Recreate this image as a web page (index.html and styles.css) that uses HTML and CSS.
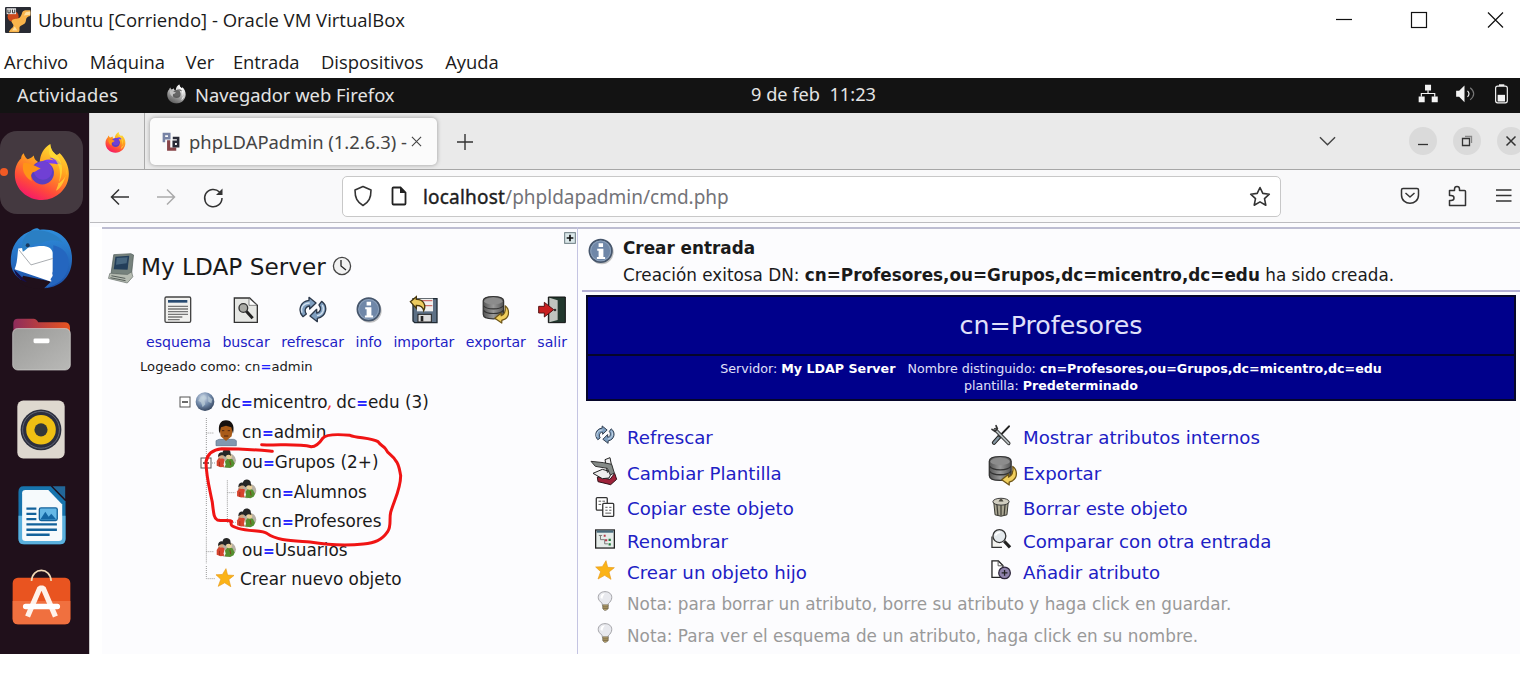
FILE: index.html
```html
<!DOCTYPE html>
<html lang="es">
<head>
<meta charset="utf-8">
<title>Ubuntu [Corriendo] - Oracle VM VirtualBox</title>
<link rel="stylesheet" href="styles.css">
</head>
<body>
<svg class="defs" aria-hidden="true">
  <defs>
    <linearGradient id="gFox" x1="0.8" y1="0" x2="0.3" y2="1"><stop offset="0" stop-color="#ffe83a"/><stop offset=".4" stop-color="#ffa01f"/><stop offset=".75" stop-color="#ff4a3a"/><stop offset="1" stop-color="#f5176c"/></linearGradient>
    <linearGradient id="gBlue" x1="0" y1="0" x2="0" y2="1"><stop offset="0" stop-color="#2f8fdc"/><stop offset="1" stop-color="#1c4fa8"/></linearGradient>
    <linearGradient id="gGray" x1="0" y1="0" x2="1" y2="1"><stop offset="0" stop-color="#9a9a98"/><stop offset="1" stop-color="#b9b9b7"/></linearGradient>
    <linearGradient id="gFold" x1="0" y1="0" x2="1" y2="0"><stop offset="0" stop-color="#8e2c5c"/><stop offset="1" stop-color="#e9541f"/></linearGradient>
    <linearGradient id="gCyl" x1="0" y1="0" x2="1" y2="0"><stop offset="0" stop-color="#555"/><stop offset=".5" stop-color="#999"/><stop offset="1" stop-color="#555"/></linearGradient>
    <radialGradient id="gGlobe" cx=".4" cy=".3" r=".8"><stop offset="0" stop-color="#d5e0ee"/><stop offset=".5" stop-color="#7088a8"/><stop offset="1" stop-color="#26344c"/></radialGradient>
  </defs>
  <symbol id="firefox" viewBox="0 0 168 172">
    <path fill="url(#gFox)" d="M2 92C2 68 12 52 21 44c0-7 3-12 8-16 2 9 6 14 12 18 8-3 13-5 18-11 1 11 8 18 18 22C78 30 90 12 109 0c1 16 8 25 19 33 5-2 7-3 9-6 18 18 28 40 28 63 0 45-37 79-81 79S2 137 2 92z"/>
    <path fill="#7b3ff0" d="M76 60c12-14 31-16 43-10-2-4-7-6-12-8 16-2 30 10 35 20-2-1-8-3-13-1-14-3-39-4-53-1z"/>
    <circle cx="85" cy="87" r="35" fill="#5a3fc0"/><circle cx="87" cy="80" r="28" fill="#7040d4"/>
    <path fill="#ff9417" d="M28 57c17-1 33 9 52 17-10 3-12 10-24 11-7 7-6 18-2 26-16-6-34-30-26-54z"/>
    <path fill="#ffdd36" opacity=".75" d="M109 0c1 16 8 25 19 33 22 22 21 63 4 88 10-8 30-22 28-48-4 35-19 61-34 68 16-35 17-66 0-91C107 37 99 31 109 0z"/>
  </symbol>
  <symbol id="i-info" viewBox="0 0 76 78">
    <circle cx="40" cy="41" r="35" fill="#999" opacity=".6"/><circle cx="37" cy="37" r="33" fill="#6f87a8" stroke="#46566c" stroke-width="5"/><circle cx="37" cy="37" r="29" fill="none" stroke="#8ba0ba" stroke-width="3"/>
    <path fill="#fff" d="M31 15h13v11H31zM27 31h18v24h5v6H26v-6h5V37h-4z"/>
  </symbol>
  <symbol id="i-refresh" viewBox="0 0 84 80">
    <g stroke="#2d3a4c" stroke-width="4" stroke-linejoin="round"><path fill="#7f9fc0" d="M12 60C-4 44 2 14 30 11V2l21 17-19 18v-9C19 29 15 42 22 52z"/><path fill="#7f9fc0" d="M68 14c20 14 15 46-13 51v10L33 58l20-20v11c12-2 15-14 7-24z"/></g>
    <path d="M9 48C4 32 13 20 32 19M70 25c8 14 1 30-16 32" fill="none" stroke="#d2e0ee" stroke-width="4"/>
  </symbol>
  <symbol id="i-export" viewBox="0 0 90 92">
    <path fill="url(#gCyl)" stroke="#333" stroke-width="4" d="M3 16C3 6 19 2 36 2s34 4 34 14v44c0 10-16 15-34 15S3 70 3 60z"/>
    <ellipse cx="36" cy="17" rx="30" ry="11" fill="#8c8c8c"/><path d="M4 32c10 14 55 14 65 0M4 47c10 14 55 14 65 0" fill="none" stroke="#333" stroke-width="4"/>
    <path fill="#f1cf5d" stroke="#6e5517" stroke-width="4" stroke-linejoin="round" d="M75 32c14 10 16 34-1 44l-10 4v9L41 73l21-17v9c12-5 15-18 13-33z"/>
  </symbol>
  <symbol id="i-group" viewBox="0 0 62 62">
    <ellipse cx="33" cy="34" rx="27" ry="22" fill="#b7b0a4"/><path fill="#d6452f" d="M4 50V36l8-10 14 4 2 22-12 2z"/><path fill="#558f2f" d="M28 54V38l8-10 14 3 6 12-3 8-10 5z"/>
    <circle cx="16" cy="22" r="7" fill="#d2a67e"/><circle cx="40" cy="23" r="8" fill="#e8cf9a"/><path fill="#262626" d="M8 24c-1-11 7-15 13-13 1-14 25-13 23 3l2 7c-7-5-13-4-17 3-5-7-13-6-21 0z"/><path d="M24 46l3-12 3 12-3 8z" fill="#f4f4f4"/><path d="M12 38v14M42 35l3 13" stroke="#902214" stroke-width="2"/>
  </symbol>
  <symbol id="i-star" viewBox="0 0 60 60"><path fill="#fbb316" stroke="#e79a19" stroke-width="2" d="M33 2l5 20 20 1-16 13 6 22-19-12-20 11 8-22L2 21l20-1z"/></symbol>
  <symbol id="i-bulb" viewBox="0 0 48 62">
    <path fill="#e8e9ee" stroke="#a0a0a5" stroke-width="3" d="M15 38C7 32 3 26 3 20 3 9 12 2 24 2s21 7 21 18c0 8-5 14-11 20v5H16z"/><path fill="#fff" d="M10 21C10 12 16 7 24 8c-4 4-7 9-8 17z"/><path fill="#b6a06a" stroke="#6b6352" stroke-width="2" d="M17 43h17v12l-7 5h-5l-5-5z"/><path d="M17 49h17M18 54h15" stroke="#62573c" stroke-width="2"/>
  </symbol>
  <symbol id="i-minus" viewBox="0 0 36 36"><rect x="3" y="3" width="30" height="30" fill="#fff" stroke="#555" stroke-width="3"/><path d="M9 18h18" stroke="#222" stroke-width="4"/></symbol>
</svg>

<header class="titlebar">
  <svg class="vb" viewBox="0 0 80 80"><rect width="80" height="80" rx="3" fill="#292b33"/><circle cx="25" cy="29" r="17" fill="#cc4a1c"/><path fill="#f9b44b" d="M78 10H62C50 12 54 24 46 32c-8 6-18 2-24 8-5 6 2 10 4 16 0 8-10 10-14 22h30c6-6 0-14 4-18 8-6 16-6 18-16 2-12 4-14 14-16z"/><path fill="#ffe0a0" d="M78 14l-14 2-6 10 20-2zM22 72l8-12 8 12z"/><rect x="5" y="4" width="29" height="18" fill="#e8e8e8"/><path d="M9 8v10h7V8M23 8v10h7V8" stroke="#333" stroke-width="3" fill="none"/></svg>
  <span class="title">Ubuntu [Corriendo] - Oracle VM VirtualBox</span>
  <svg class="winbtns" viewBox="0 0 164 20"><g fill="none" stroke="#111" stroke-width="1.2"><path d="M0 9.500h16"/><rect x="75.500" y="2.500" width="15" height="15"/><path d="M152 2.500l15 15M167 2.500l-15 15"/></g></svg>
</header>
<nav class="menubar"><span>Archivo</span><span>Máquina</span><span class="ver">Ver</span><span class="ent">Entrada</span><span>Dispositivos</span><span>Ayuda</span></nav>

<main class="desktop">
  <div class="topbar">
    <span class="act">Actividades</span>
    <svg class="foxgray" viewBox="0 0 168 172"><use href="#firefox"/></svg>
    <span class="app">Navegador web Firefox</span>
    <span class="clock">9 de feb&nbsp; 11:23</span>
    <svg class="tray" viewBox="0 0 272 62"><g fill="#f4f4f4"><path d="M21 2h18v17H21zM2 37h18v17H2zM41 37h18v17H41zM114 20h9l16-16v50l-16-16h-9z"/><path d="M238 32h22v20h-22z"/></g><g fill="none" stroke="#f4f4f4" stroke-width="3.500"><path d="M30 18v10M10 38V28h40v10"/><path d="M148 20c6 6 6 12 0 18"/><path d="M156 11c14 12 14 24 0 36" stroke="#777"/><rect x="232" y="6" width="35" height="50" rx="6"/><path d="M242 3h16" stroke-width="5"/></g></svg>
  </div>
  <div class="workspace">
    <aside class="dock">
      <div class="tile active"><i class="dot"></i><svg width="56" height="57"><use href="#firefox"/></svg></div>
      <svg class="bird" viewBox="0 0 192 188">
        <path fill="url(#gBlue)" d="M3 112C-2 57 30 23 63 12 76 0 86 2 91 8c60-6 98 33 98 88 0 47-27 86-85 90l13-13C71 171 63 158 50 166 23 159 5 137 3 112z"/>
        <path fill="#20101b" d="M40 148l92 19-10 10-20 12c-28 0-50-4-72-20z"/><path fill="#16104a" d="M12 128l40 40C30 162 16 148 12 128z"/><path fill="#fff" d="M25 65c16-2 35-3 55-6 30-5 48 3 50 19v90L14 128c8-17 8-37 11-63z"/>
        <path fill="none" stroke="#a8acb0" stroke-width="3" d="M27 69l37 46 68-20"/><path fill="#2a7fc4" d="M62 13C88 3 146 17 160 47c-20-10-44-10-66 3C65 47 58 63 39 75c-8-32 6-50 23-62z"/><path fill="#2466bf" d="M132 55c34 8 50 30 46 62-4 37-29 59-74 69l23-22c-7-4-2-8 6-18-7-2-3-10 3-20-8 0-4-34-4-71z"/><circle cx="54" cy="55" r="6" fill="#17395f"/>
      </svg>
      <svg class="files" viewBox="0 0 178 160"><path fill="url(#gFold)" d="M4 50V15Q5 2 17 2h48q9 0 14 11h80q15 0 16 15v24z"/><rect x="2" y="32" width="174" height="125" rx="15" fill="url(#gGray)" stroke="#d5d4d2" stroke-width="2"/><rect x="65" y="62" width="48" height="14" rx="4" fill="#fff"/></svg>
      <svg class="speaker" viewBox="0 0 146 178"><rect x="1" y="1" width="144" height="176" rx="18" fill="#ded8cf"/><circle cx="73" cy="90" r="62" fill="#2c2f3e"/><circle cx="73" cy="90" r="56" fill="none" stroke="#636776" stroke-width="3"/><circle cx="73" cy="90" r="45" fill="#efbf13"/><circle cx="73" cy="90" r="20" fill="#343838"/></svg>
      <svg class="writer" viewBox="0 0 144 178"><path fill="#1774ad" d="M16 1h82l45 46v112q0 17-17 17H18q-17 0-17-17V18Q1 1 16 1z"/><path fill="#5ab0dd" d="M1 90h142v69q0 17-17 17H18q-17 0-17-17z"/><path fill="#f6fafc" d="M22 12h69l42 44v100q0 10-10 10H22q-10 0-10-10V22q0-10 10-10z"/><path fill="#226799" d="M104 1h38v38z"/><path d="M25 68h30M25 84h30M25 100h30M25 116h92M25 132h92M25 147h70" stroke="#12629b" stroke-width="7"/><rect x="64" y="66" width="54" height="38" rx="5" fill="#65b8e6" stroke="#12629b" stroke-width="4"/><path fill="#1467a4" d="M67 101l15-23 10 15 8-9 15 17z"/></svg>
      <svg class="store" viewBox="0 0 178 166"><rect x="2" y="25" width="174" height="140" rx="16" fill="#e95420"/><path fill="#f0703f" d="M2 95h174v54q0 16-16 16H18q-16 0-16-16z"/><path fill="none" stroke="#f1d9b5" stroke-width="5" d="M59 35C60-8 117-8 118 35"/><path fill="none" stroke="#fff2ea" stroke-width="16" stroke-linejoin="bevel" d="M47 142L84 56h10l37 86"/><rect x="33" y="103" width="112" height="17" rx="8" fill="#fff"/></svg>
    </aside>
    <section class="browser">
      <div class="tabs">
        <div class="pin"><svg width="21" height="21"><use href="#firefox"/></svg></div>
        <div class="tab">
          <svg class="pla" viewBox="0 0 60 60"><path fill="none" stroke="#7783a5" stroke-width="8" d="M6 32V6h17v14H6"/><path fill="none" stroke="#884448" stroke-width="10" d="M21 26v28h24"/><path fill="none" stroke="#292b37" stroke-width="8" d="M34 19h17v26H37V31h14"/></svg>
          <span class="tabtext">phpLDAPadmin (1.2.6.3) -</span>
          <svg class="x" viewBox="0 0 12 12"><path d="M1 1l10 10M11 1L1 11" stroke="#444" stroke-width="1.200"/></svg>
        </div>
        <svg class="plus" viewBox="0 0 16 16"><path d="M8 0v16M0 8h16" stroke="#333" stroke-width="1.400"/></svg>
        <svg class="chev" viewBox="0 0 18 10"><path d="M1 1l8 8 8-8" fill="none" stroke="#444" stroke-width="1.500"/></svg>
        <span class="round"><svg viewBox="0 0 28 28"><path d="M9 17.500h10" stroke="#333" stroke-width="1.300"/></svg></span>
        <span class="round"><svg viewBox="0 0 28 28"><g fill="none" stroke="#333" stroke-width="1.300"><path d="M9.500 11.500h7v7h-7z"/><path d="M12 9.500h6.500V16" stroke="#888"/></g></svg></span>
        <span class="round"><svg viewBox="0 0 28 28"><path d="M9.500 9.500l9 9M18.500 9.500l-9 9" stroke="#333" stroke-width="1.500"/></svg></span>
      </div>
      <div class="navbar">
        <svg class="hist" viewBox="0 0 114 20"><g fill="none" stroke-width="1.500"><path stroke="#333" d="M19 10H1.500M9 2.500L1.500 10l7.500 7.500"/><path stroke="#aaa" d="M47 10h17.500M57 2.500l7.500 7.500-7.500 7.500"/><path stroke="#333" d="M109.500 5a8.700 8.700 0 1 0 2.500 6"/></g><path fill="#333" d="M112.500 1.500v6.500H106z"/></svg>
        <div class="url">
          <svg class="shield" viewBox="0 0 20 22"><path d="M10 1.500L18 5c0 8-2 12-8 15.500C4 17 2 13 2 5z" fill="none" stroke="#333" stroke-width="1.600" stroke-linejoin="round"/></svg>
          <svg class="doc" viewBox="0 0 16 20"><path d="M2.500 1.500h7l5 5v11q0 1-1 1h-11q-1 0-1-1v-15q0-1 1-1z" fill="none" stroke="#222" stroke-width="1.800"/><path d="M9 1l6 6H9z" fill="#222"/></svg>
          <span class="addr"><b>localhost</b>/phpldapadmin/cmd.php</span>
          <svg class="fav" viewBox="0 0 22 22"><path d="M11 1.500l2.800 5.900 6.500.8-4.800 4.400 1.300 6.600-5.800-3.300-5.800 3.300 1.300-6.600L1.700 8.200l6.500-.8z" fill="none" stroke="#333" stroke-width="1.600" stroke-linejoin="round"/></svg>
        </div>
        <svg class="tools" viewBox="0 0 112 22"><g fill="none" stroke="#333" stroke-width="1.500" stroke-linejoin="round"><path d="M3 3.500h14q1.500 0 1.500 1.500v5c0 11-17 11-17 0V5q0-1.500 1.500-1.500z"/><path d="M5.500 8l4.500 4 4.500-4"/><path d="M49.500 5.500h5V4c0-3.500 5-3.500 5 0v1.500h5q1 0 1 1v14H49.500v-5h1.500c4 0 4-5 0-5h-1.500z"/><path d="M96 5h15.500M96 10.500h15.500M96 16h15.500"/></g></svg>
      </div>
      <div class="page">
        <section class="left">
          <svg class="expand" viewBox="0 0 36 36"><rect x="2" y="2" width="32" height="32" fill="#dbe8ea" stroke="#697a80" stroke-width="3"/><path d="M18 8v20M8 18h20" stroke="#111" stroke-width="5"/></svg>
          <div class="server">
            <svg class="pc" viewBox="0 0 84 94"><path fill="#76827d" stroke="#4a5553" stroke-width="2" d="M20 5l52-3 8 4-6 58-17 5-45-8z"/><path fill="#233e5a" d="M25 11l42-3-5 43-42-2z"/><path fill="#46657e" d="M29 15l33-2-3 18-32 5z"/><path fill="#b6bcb2" stroke="#616b66" stroke-width="2" d="M8 62l54 3 12-8 4 15-17 19-57-14z"/><path d="M13 69l42 8M10 75l46 9" stroke="#555d59" stroke-width="3"/></svg>
            <span class="sname">My LDAP Server</span>
            <svg class="clk" viewBox="0 0 20 20"><circle cx="10" cy="10" r="8.600" fill="#f2f2f2" stroke="#444" stroke-width="1.300"/><path d="M9 4v6l5 4" fill="none" stroke="#222" stroke-width="1.300"/></svg>
          </div>
          <div class="actions">
            <a><svg class="ai" viewBox="0 0 84 84"><rect x="3" y="3" width="77" height="76" rx="4" fill="#f1f1ef" stroke="#444" stroke-width="4"/><path d="M12 16h58" stroke="#284b72" stroke-width="8"/><path d="M12 31h60M12 39h60M12 47h60M12 55h60M12 63h43M12 71h35" stroke="#777" stroke-width="4"/></svg>esquema</a>
            <a><svg class="ai" viewBox="0 0 84 84"><path fill="#e6e7e4" stroke="#333" stroke-width="4" d="M7 6h46l23 22v51H7z"/><path fill="#fff" stroke="#555" stroke-width="2" d="M51 7v21h24z"/><circle cx="34" cy="36" r="13" fill="#a9aaa5" stroke="#333" stroke-width="4"/><path d="M43 46l19 21" stroke="#222" stroke-width="9"/></svg>buscar</a>
            <a><svg class="ai"><use href="#i-refresh"/></svg>refrescar</a>
            <a><svg class="ai info"><use href="#i-info"/></svg>info</a>
            <a><svg class="ai" viewBox="0 0 84 84"><path fill="#5d7085" stroke="#202b35" stroke-width="4" d="M9 8h72v72H14l-5-5z"/><rect x="21" y="8" width="48" height="38" fill="#f0f0ef"/><path d="M23 14h44M23 29h44" stroke="#ce706e" stroke-width="4"/><rect x="24" y="55" width="40" height="23" fill="#ddd" stroke="#222" stroke-width="3"/><path d="M36 60v16" stroke="#222" stroke-width="8"/><path fill="#edcb5f" stroke="#48380e" stroke-width="4" d="M1 17L19 2v8c20-1 31 17 22 34-2-12-9-16-22-16v9z"/></svg>importar</a>
            <a><svg class="ai"><use href="#i-export"/></svg>exportar</a>
            <a><svg class="ai" viewBox="0 0 84 84"><path fill="#22382e" stroke="#111" stroke-width="3" d="M31 3h51v77H31z"/><path fill="#c0c4bf" d="M34 5l25 8v59l-25 7z"/><path fill="#c81f20" stroke="#571414" stroke-width="3" d="M2 31h17V19l28 22-28 22V51H2z"/><circle cx="51" cy="42" r="4" fill="#333"/></svg>salir</a>
          </div>
          <div class="logged">Logeado como: cn<b>=</b>admin</div>
          <div class="tree">
            <div class="row r1"><svg width="37" height="22" viewBox="0 0 111 66"><use href="#i-minus" y="15" width="36" height="36"/><circle cx="78" cy="32" r="28" fill="url(#gGlobe)"/><path d="M66 17l9-5 8 9-7 8 3 11-8 9-5-15-8-5zM87 15l13 10-3 12-9-5z" fill="#becfd9" opacity=".7"/></svg><span>dc<b>=</b>micentro<em>,</em> dc<b>=</b>edu (3)</span></div>
            <div class="row r2"><svg width="32" height="30" viewBox="0 0 96 90"><path class="guide" d="M4 3v85M4 48h24"/><path fill="#8298b0" stroke="#5b7088" stroke-width="2" d="M33 71q9-6 18-4h25q14-2 18 4v15H33z"/><path fill="#a95b18" d="M43 31q3-14 20-14t21 14l-4 27-17 14-16-14z"/><path fill="#16110f" d="M43 50c-5-26 3-40 20-40s27 14 21 40l-5-19-16-5-15 5z"/><path d="M51 41h7M68 41h7M57 57h13" stroke="#50270e" stroke-width="3"/></svg><span>cn<b>=</b>admin</span></div>
            <div class="row r3"><svg width="37" height="30" viewBox="0 0 111 90"><path class="guide" d="M19 0v90M36 48h10"/><use href="#i-minus" y="30" width="36" height="36"/><use href="#i-group" x="46" y="5" width="64" height="64"/></svg><span>ou<b>=</b>Grupos (2+)</span></div>
            <div class="row r4"><svg width="52" height="30" viewBox="0 0 156 90"><path class="guide" d="M4 0v90M67 10v80M67 47h25"/><use href="#i-group" x="92" y="6" width="64" height="64"/></svg><span>cn<b>=</b>Alumnos</span></div>
            <div class="row r5"><svg width="52" height="28" viewBox="0 0 156 84"><path class="guide" d="M4 3v80M67 3v43h25"/><use href="#i-group" x="92" y="3" width="64" height="64"/></svg><span>cn<b>=</b>Profesores</span></div>
            <div class="row r6"><svg width="32" height="30" viewBox="0 0 96 90"><path class="guide" d="M4 5v80M4 50h24"/><use href="#i-group" x="31" y="8" width="64" height="64"/></svg><span>ou<b>=</b>Usuarios</span></div>
            <div class="row r7"><svg width="32" height="28" viewBox="0 0 96 84"><path class="guide" d="M4 3v38h26"/><use href="#i-star" x="31" y="9" width="58" height="58"/></svg><span>Crear nuevo objeto</span></div>
            <svg class="scribble" viewBox="0 0 900 660"><path d="M367 217C345 215 290 209 215 209 185 212 172 225 168 248 168 290 180 335 187 370 191 405 192 418 202 423 220 427 240 422 245 427 240 439 244 441 265 448 300 458 340 453 352 464 380 485 430 485 480 489 535 498 595 500 640 495 675 492 695 484 713 458 725 440 717 420 722 400 732 365 752 330 752 290 748 270 747 255 737 245 728 228 713 225 707 210 700 200 692 200 684 188 665 177 620 177 600 169 570 166 530 164 518 178 510 190 500 203 484 203 440 193 385 200 335 197"/></svg>
          </div>
        </section>
        <section class="right">
          <div class="message">
            <svg class="minfo"><use href="#i-info"/></svg>
            <div><h3>Crear entrada</h3><p>Creación exitosa DN: <b>cn=Profesores,ou=Grupos,dc=micentro,dc=edu</b> ha sido creada.</p></div>
          </div>
          <div class="banner">
            <h1>cn=Profesores</h1>
            <div class="sub"><p>Servidor: <b>My LDAP Server</b> &nbsp; Nombre distinguido: <b>cn=Profesores,ou=Grupos,dc=micentro,dc=edu</b></p><p>plantilla: <b>Predeterminado</b></p></div>
          </div>
          <div class="links">
            <a><svg class="s20"><use href="#i-refresh"/></svg>Refrescar</a>
            <a><svg class="s20" viewBox="0 0 60 60"><g fill="none" stroke-linecap="round"><path stroke="#222" stroke-width="13" d="M9 53l18-20"/><path stroke="#8496a1" stroke-width="7" d="M9 53l18-20"/><path stroke="#222" stroke-width="6" d="M25 34L54 4"/><path stroke="#333" stroke-width="11" d="M13 14l40 41"/><path stroke="#b8bfc0" stroke-width="5" d="M13 14l40 41"/><path stroke="#333" stroke-width="5" d="M3 13l9 6 7-8-4-9"/></g></svg>Mostrar atributos internos</a>
            <a><svg class="s30" viewBox="0 0 90 84"><path fill="#9e233a" stroke="#33131b" stroke-width="3" d="M22 60l38 7 14-18 6 18-18 16-38-9z"/><path fill="#eee" stroke="#222" stroke-width="3" d="M45 8l15-6 7 35-15 9zM9 49l28-12 29 8-9 18-20 2z"/><path fill="#858b88" stroke="#333" stroke-width="3" d="M3 13l38 4 24 5 8 26-12 6-9-20-36-6z"/></svg>Cambiar Plantilla</a>
            <a><svg class="exp"><use href="#i-export"/></svg>Exportar</a>
            <a><svg class="s20" viewBox="0 0 60 62"><g fill="#fff" stroke="#333" stroke-width="4"><rect x="3" y="2" width="34" height="39" rx="3"/><rect x="23" y="20" width="34" height="40" rx="3"/></g><path d="M10 13h8M22 13h8M10 23h8M31 32h7M43 32h7M31 41h7M43 41h7M31 50h18" stroke="#555" stroke-width="3"/></svg>Copiar este objeto</a>
            <a><svg class="s20" viewBox="0 0 60 64"><path fill="#aaa693" stroke="#30302a" stroke-width="3" d="M7 18h46l-4 39q-19 9-38 0z"/><path stroke="#403f36" stroke-width="4" d="M17 24l3 34M30 25v34M43 24l-3 34"/><ellipse cx="30" cy="15" rx="26" ry="11" fill="#d1cec0" stroke="#333" stroke-width="3"/><path fill="#4b493f" d="M22 14q8-17 16 0z"/></svg>Borrar este objeto</a>
            <a><svg class="s20" viewBox="0 0 62 60"><rect x="2" y="2" width="58" height="56" fill="#e5ece9" stroke="#222" stroke-width="4"/><path d="M5 7h52" stroke="#486a7c" stroke-width="7"/><path d="M12 19h10M17 19v13h13v13h10" stroke="#777" stroke-width="3" fill="none"/><path d="M27 17h6v6h-6zM31 31h7v6h-7z" fill="#b83b4e"/><path d="M42 29h7v7h-7zM42 43h7v7h-7z" fill="#257b3d"/></svg>Renombrar</a>
            <a><svg class="s20" viewBox="0 0 62 62"><path fill="#f3f3ef" stroke="#333" stroke-width="4" d="M3 23v34h31"/><circle cx="26" cy="22" r="20" fill="#e4e9ec" stroke="#333" stroke-width="4"/><path d="M14 20q4-10 15-10" stroke="#fff" stroke-width="5" fill="none"/><path d="M41 38l18 19" stroke="#222" stroke-width="10"/></svg>Comparar con otra entrada</a>
            <a><svg class="s20"><use href="#i-star"/></svg>Crear un objeto hijo</a>
            <a><svg class="s20" viewBox="0 0 62 62"><path fill="#fff" stroke="#222" stroke-width="4" d="M3 3h20l14 14v37H3z"/><path fill="none" stroke="#555" stroke-width="3" d="M22 3v15h15"/><circle cx="42" cy="40" r="18" fill="#8f83ab" stroke="#30283e" stroke-width="4"/><path d="M42 31v18M33 40h18" stroke="#222" stroke-width="4"/></svg>Añadir atributo</a>
            <p><svg class="bulb"><use href="#i-bulb"/></svg>Nota: para borrar un atributo, borre su atributo y haga click en guardar.</p>
            <p><svg class="bulb"><use href="#i-bulb"/></svg>Nota: Para ver el esquema de un atributo, haga click en su nombre.</p>
          </div>
        </section>
      </div>
    </section>
  </div>
</main>
</body>
</html>
```
FILE: styles.css
```css
* { box-sizing: border-box; }
body { margin: 0; width: 1522px; height: 688px; overflow: hidden; background: #fff; color: #1a1a1a; font-family: "Open Sans", sans-serif; }
h1, h3, p { margin: 0; font-weight: 400; }
svg { flex: none; overflow: visible; }
.defs { position: absolute; width: 0; height: 0; }

.titlebar { display: flex; align-items: center; height: 40px; padding-left: 5px; font-size: 18.5px; }
.vb { width: 26px; height: 26px; margin-top: -1px; }
.title { margin: -2px 0 0 7px; white-space: nowrap; }
.winbtns { width: 164px; height: 20px; margin: 0 22px 0 auto; }
.menubar { display: flex; gap: 21.5px; height: 38px; padding: 3px 0 0 4px; font-size: 18.4px; line-height: 37px; }
.menubar .ver { margin: 0 -3px 0 -1px; }
.menubar .ent { letter-spacing: -.1px; }

.desktop { width: 1520px; height: 576px; overflow: hidden; font-family: "Noto Sans", sans-serif; }
.topbar { display: flex; align-items: center; height: 35px; padding-bottom: 2px; background: #131313; color: #e4e4e4; font-size: 18.35px; white-space: nowrap; }
.act { width: 150px; padding-left: 17px; letter-spacing: .3px; }
.foxgray { width: 19px; height: 20px; margin: -1px 9px 0 17px; filter: grayscale(1) brightness(1.2); }
.app { width: 556px; }
.clock { font-size: 18.2px; margin-top: -1px; }
.tray { width: 91px; height: 21px; margin: 0 11px 0 auto; }

.workspace { display: flex; height: 541px; }
.dock { display: flex; flex-direction: column; width: 89px; background: #20101b; }
.tile { position: relative; display: flex; align-items: center; justify-content: center; width: 83px; height: 83px; margin-top: 18px; border-radius: 17px; background: #443940; }
.dot { position: absolute; left: 0; top: 37px; width: 8px; height: 8px; border-radius: 50%; background: #f15a24; }
.bird { width: 63px; height: 62px; margin: 13px 0 0 10px; }
.files { width: 59px; height: 53px; margin: 29px 0 0 12px; }
.speaker { width: 48px; height: 59px; margin: 29px 0 0 17px; }
.writer { width: 48px; height: 59px; margin: 27px 0 0 18px; }
.store { width: 59px; height: 56px; margin: 24px 0 0 12px; }

.browser { flex: 1; display: flex; flex-direction: column; min-width: 0; border-left: 1px solid #ccc; }
.tabs { display: flex; align-items: center; height: 57px; background: #eaeaea; border-bottom: 1px solid #a7a7a7; }
.pin { display: flex; align-items: center; justify-content: center; width: 55px; height: 56px; padding: 2px 4px 0 0; border-right: 1px solid #aaa; }
.tab { display: flex; align-items: center; width: 287px; height: 47px; margin-left: 5px; padding-left: 12px; border-radius: 5px; background: #fbfbfb; box-shadow: 0 0 4px #999; color: #444; font-size: 18.4px; white-space: nowrap; }
.pla { width: 19px; height: 19px; margin-right: 8px; }
.tabtext { width: 222px; }
.x { width: 11px; height: 11px; }
.plus { width: 16px; height: 16px; margin: 2px 0 0 20px; }
.chev { width: 17px; height: 10px; margin-left: auto; margin-right: 73px; }
.round { flex: none; width: 28px; height: 28px; margin-right: 16px; border-radius: 50%; background: #dadada; }
.round svg { display: block; width: 28px; height: 28px; }
.round:last-child { margin-right: -5px; }
.navbar { display: flex; align-items: center; height: 53px; background: #f9f9fa; border-bottom: 1px solid #bcbcc0; }
.hist { width: 114px; height: 20px; margin: 2px 0 0 20px; }
.url { display: flex; align-items: center; width: 939px; height: 41px; margin: 0 0 0 118px; padding-left: 10px; border: 1px solid #c8c8c8; border-radius: 5px; background: #fff; color: #737378; font-size: 19px; white-space: nowrap; }
.shield { width: 20px; height: 22px; margin-right: 18px; }
.doc { width: 16px; height: 20px; margin-right: 16px; }
.addr { padding-top: 1px; }
.addr b { color: #1d1d1d; font-weight: 400; -webkit-text-stroke: .4px #1d1d1d; letter-spacing: .2px; }
.fav { width: 22px; height: 22px; margin: 1px 9px 0 auto; }
.tools { width: 112px; height: 22px; margin-left: 119px; }

.page { display: flex; height: 431px; padding-top: 4px; background: #fcfcfe; font-family: "DejaVu Sans", sans-serif; color: #1a1a1a; white-space: nowrap; }
.left { position: relative; flex: none; width: 488px; border-left: 12px solid #fff; border-right: 1px solid #c4c4e2; box-shadow: inset 0 2px #bdbdd2; }
.expand { position: absolute; right: 1px; top: 5px; width: 12px; height: 12px; }
.server { display: flex; align-items: center; height: 40px; margin-top: 19px; padding-left: 5px; font-size: 23.2px; }
.pc { width: 28px; height: 31px; margin-top: 4px; }
.sname { margin-left: 6px; }
.clk { width: 20px; height: 20px; margin-left: 6px; }
.actions { display: flex; justify-content: space-between; width: 421px; margin: 10px 0 0 44px; color: #2020c4; font-size: 14.1px; line-height: 20px; }
.actions a { display: flex; flex-direction: column; align-items: center; gap: 8px; }
.ai { width: 28px; height: 28px; }
.ai.info { width: 26px; height: 28px; }
.logged { margin: 6px 0 0 38px; font-size: 13.15px; line-height: 18px; }
.logged b, .tree b { color: #2020ff; }
.tree { position: relative; margin-top: 10px; font-size: 16.85px; }
.tree b { font-size: 14px; }
.row { display: flex; align-items: center; height: 30px; }
.row svg { margin-right: 5px; }
.r1 { height: 31px; padding-left: 77px; }
.r2, .r4, .r5, .r6, .r7 { padding-left: 103px; }
.r3 { padding-left: 98px; }
.r5, .r7 { height: 28px; }
.r7 svg { margin-right: 3px; }
.row em { color: #f33; letter-spacing: -2px; }
.guide { fill: none; stroke: #999; stroke-width: 3; stroke-dasharray: 3 3; }
.tree .scribble { position: absolute; left: 48px; top: -7px; width: 300px; height: 220px; margin: 0; }
.scribble path { fill: none; stroke: #f01414; stroke-width: 9; stroke-linecap: round; stroke-linejoin: round; }

.right { flex: 1; min-width: 0; padding-left: 4px; box-shadow: inset 0 2px #bdbdd2; }
.message { display: flex; height: 65px; padding: 7px 0 0 6px; border-bottom: 2px solid #b4b0d4; font-size: 16.84px; line-height: 27px; }
.minfo { width: 26px; height: 27px; margin: 4px 9px 0 0; }
.message h3 { font-size: 16.84px; font-weight: 700; line-height: 28px; }
.banner { width: 930px; height: 106px; margin: 3px 0 0 4px; border: 2px solid #05052a; background: #00008b; color: #e0e0fa; text-align: center; }
.banner h1 { height: 59px; border-bottom: 2px solid #05052a; font-size: 25.3px; line-height: 58px; }
.sub { padding-top: 4px; font-size: 12.65px; line-height: 17px; }
.sub b { color: #fff; }
.links { display: grid; grid-template-columns: 396px 1fr; grid-template-rows: 36px 36px 35px 30px 32px 32px 31px; margin-top: 18px; padding-left: 5px; font-size: 18.2px; color: #2020c4; }
.links a, .links p { display: flex; align-items: center; }
.links p { grid-column: 1 / 3; color: #999; font-size: 16.84px; }
.s20 { width: 20px; height: 20px; margin: -4px 12px 0 8px; }
.s30 { width: 30px; height: 28px; margin: -5px 7px 0 3px; }
.exp { width: 30px; height: 30px; margin: -5px 5px 0; }
.bulb { width: 16px; height: 20px; margin: -6px 14px 0 10px; }
```
